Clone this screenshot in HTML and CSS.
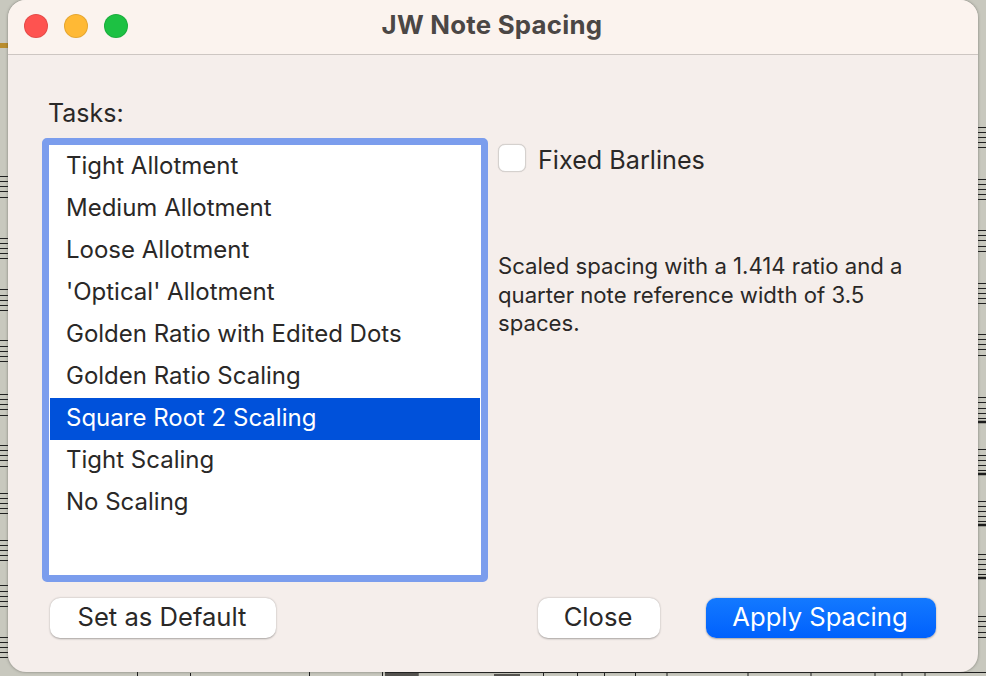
FILE: index.html
```html
<!DOCTYPE html>
<html lang="en">
<head>
<meta charset="utf-8">
<title>JW Note Spacing</title>
<link rel="stylesheet" href="styles.css">
</head>
<body>
<svg class="score" width="986" height="676" viewBox="0 0 986 676" aria-hidden="true">
  <path class="gold" d="M0 45.5H8"/>
  <path class="staff" d="M0 176.5H8M0 181.5H8M0 186.5H8M0 191.5H8M0 197.5H8M0 238.5H8M0 243.5H8M0 248.5H8M0 253.5H8M0 258.5H8M0 289.5H8M0 295.5H8M0 300.5H8M0 305.5H8M0 310.5H8M0 340.5H8M0 346.5H8M0 351.5H8M0 356.5H8M0 361.5H8M0 394.5H8M0 399.5H8M0 404.5H8M0 409.5H8M0 415.5H8M0 445.5H8M0 450.5H8M0 455.5H8M0 460.5H8M0 466.5H8M0 493.5H8M0 498.5H8M0 503.5H8M0 508.5H8M0 513.5H8M0 540.5H8M0 545.5H8M0 550.5H8M0 555.5H8M0 560.5H8M0 585.5H8M0 591.5H8M0 596.5H8M0 601.5H8M0 606.5H8M0 637.5H8M0 642.5H8M0 647.5H8M0 652.5H8M0 657.5H8"/>
  <path class="staff" d="M978 127.5H986M978 132.5H986M978 137.5H986M978 142.5H986M978 147.5H986M978 179.5H986M978 184.5H986M978 189.5H986M978 194.5H986M978 199.5H986M978 230.5H986M978 235.5H986M978 240.5H986M978 246.5H986M978 251.5H986M978 283.5H986M978 288.5H986M978 293.5H986M978 298.5H986M978 303.5H986M978 334.5H986M978 339.5H986M978 344.5H986M978 349.5H986M978 355.5H986M978 397.5H986M978 402.5H986M978 408.5H986M978 413.5H986M978 418.5H986M978 449.5H986M978 455.5H986M978 460.5H986M978 465.5H986M978 470.5H986M978 501.5H986M978 506.5H986M978 511.5H986M978 516.5H986M978 521.5H986M978 554.5H986M978 559.5H986M978 564.5H986M978 569.5H986M978 574.5H986M978 616.5H986M978 621.5H986M978 626.5H986M978 632.5H986M978 637.5H986"/>
  <path class="thick" d="M978 422H986M978 474H986M978 525H986M978 578H986"/>
  <path class="staff" d="M385 672.5H986M137.5 672V676M309.5 672V676M190.5 673V676M382.5 672V676M418 672V676M543.5 672V676M577.5 672V676M604.5 672V676M635.5 672V676M667 672V676M748 672V676M811 672V676M875 672V676M902 672V676M925 672V676"/>
  <path class="block" d="M385 676V673H418V676ZM494 676V674H520V676Z"/>
</svg>

<main class="window">
  <header class="titlebar">
    <div class="lights">
      <span class="light light-close"></span>
      <span class="light light-min"></span>
      <span class="light light-zoom"></span>
    </div>
    <h1 class="title">JW Note Spacing</h1>
  </header>

  <div class="content">
    <div class="tasks-label">Tasks:</div>
    <div class="panels">
      <ul class="list">
        <li class="item">Tight Allotment</li>
        <li class="item">Medium Allotment</li>
        <li class="item">Loose Allotment</li>
        <li class="item">'Optical' Allotment</li>
        <li class="item">Golden Ratio with Edited Dots</li>
        <li class="item">Golden Ratio Scaling</li>
        <li class="item item-selected">Square Root 2 Scaling</li>
        <li class="item">Tight Scaling</li>
        <li class="item">No Scaling</li>
      </ul>
      <div class="side">
        <label class="check">
          <span class="checkbox"></span>
          <span class="check-text">Fixed Barlines</span>
        </label>
        <p class="description">Scaled spacing with a 1.414 ratio and a quarter note reference width of 3.5 spaces.</p>
      </div>
    </div>
    <div class="actions">
      <button class="btn btn-default" type="button">Set as Default</button>
      <div class="actions-right">
        <button class="btn btn-close" type="button">Close</button>
        <button class="btn btn-primary" type="button">Apply Spacing</button>
      </div>
    </div>
  </div>
</main>
</body>
</html>
```

FILE: styles.css
```css
* {
  box-sizing: border-box;
}

html,
body {
  margin: 0;
  height: 100%;
}

body {
  position: relative;
  width: 986px;
  height: 676px;
  overflow: hidden;
  background: #c8c8be;
  font-family: Inter, "Liberation Sans", sans-serif;
  color: #2a2827;
}

.score {
  position: absolute;
  inset: 0;
  display: block;
}

.gold {
  stroke: #b98d2e;
  stroke-width: 5;
  fill: none;
}

.staff {
  stroke: #1f1f1f;
  stroke-width: 1;
  fill: none;
}

.thick {
  stroke: #1c1c1c;
  stroke-width: 2.5;
  fill: none;
}

.block {
  fill: #55534f;
}

.window {
  position: absolute;
  left: 8px;
  top: 0;
  width: 970px;
  height: 672px;
  display: flex;
  flex-direction: column;
  background: #f5eeeb;
  border-radius: 18px;
  overflow: hidden;
  box-shadow: 0 0 3px rgba(60, 60, 55, 0.55);
}

.titlebar {
  position: relative;
  flex: none;
  height: 55px;
  display: flex;
  align-items: center;
  justify-content: center;
  background: #fbf3ee;
  border-bottom: 1px solid #cdc6c2;
}

.lights {
  position: absolute;
  left: 16px;
  top: 14px;
  display: flex;
  gap: 16px;
}

.light {
  width: 24px;
  height: 24px;
  border-radius: 50%;
  border: 1px solid rgba(0, 0, 0, 0.1);
}

.light-close {
  background: #fe5350;
}

.light-min {
  background: #ffb935;
}

.light-zoom {
  background: #1dc143;
}

.title {
  margin: -4px 2px 0 0;
  font-size: 25.8px;
  font-weight: 700;
  letter-spacing: 0.25px;
  line-height: 28px;
  color: #4b4745;
}

.content {
  flex: 1;
  display: flex;
  flex-direction: column;
  padding: 43px 42px 0 34px;
}

.tasks-label {
  margin-left: 6px;
  font-size: 25px;
  line-height: 30px;
}

.panels {
  display: flex;
  gap: 10px;
  margin-top: 10px;
}

.list {
  flex: none;
  width: 446px;
  height: 444px;
  margin: 0;
  padding: 1px 1px 0;
  list-style: none;
  background: #fff;
  border: 7px solid #7b9ded;
  border-radius: 5px;
}

.item {
  height: 42px;
  padding-left: 16px;
  font-size: 24px;
  line-height: 40px;
  white-space: nowrap;
}

.item-selected {
  background: #0051da;
  color: #fff;
}

.side {
  flex: 1;
  padding-top: 6px;
}

.check {
  display: flex;
  align-items: center;
  gap: 12px;
  height: 28px;
  font-size: 25.2px;
  line-height: 30px;
}

.check-text {
  padding-top: 3px;
}

.checkbox {
  width: 28px;
  height: 28px;
  background: #fff;
  border: 1px solid #d5d1ce;
  border-radius: 7px;
  box-shadow: 0 0 1px rgba(0, 0, 0, 0.2);
}

.description {
  margin: 80px 0 0;
  font-size: 22.15px;
  line-height: 28.5px;
  color: #2a2827;
}

.actions {
  display: flex;
  justify-content: space-between;
  margin-top: 16px;
  padding-left: 8px;
}

.actions-right {
  display: flex;
  gap: 46px;
}

.btn {
  height: 40px;
  padding: 0 2px 2px 0;
  border: 0;
  border-radius: 10px;
  font-family: inherit;
  font-size: 25.6px;
  line-height: 36px;
  color: #2a2827;
  background: #fff;
  box-shadow: 0 0.5px 2px rgba(0, 0, 0, 0.32);
}

.btn-default {
  width: 226px;
}

.btn-close {
  width: 122px;
}

.btn-primary {
  width: 230px;
  color: #fff;
  background: linear-gradient(#1379ff, #0061fd);
}
```
